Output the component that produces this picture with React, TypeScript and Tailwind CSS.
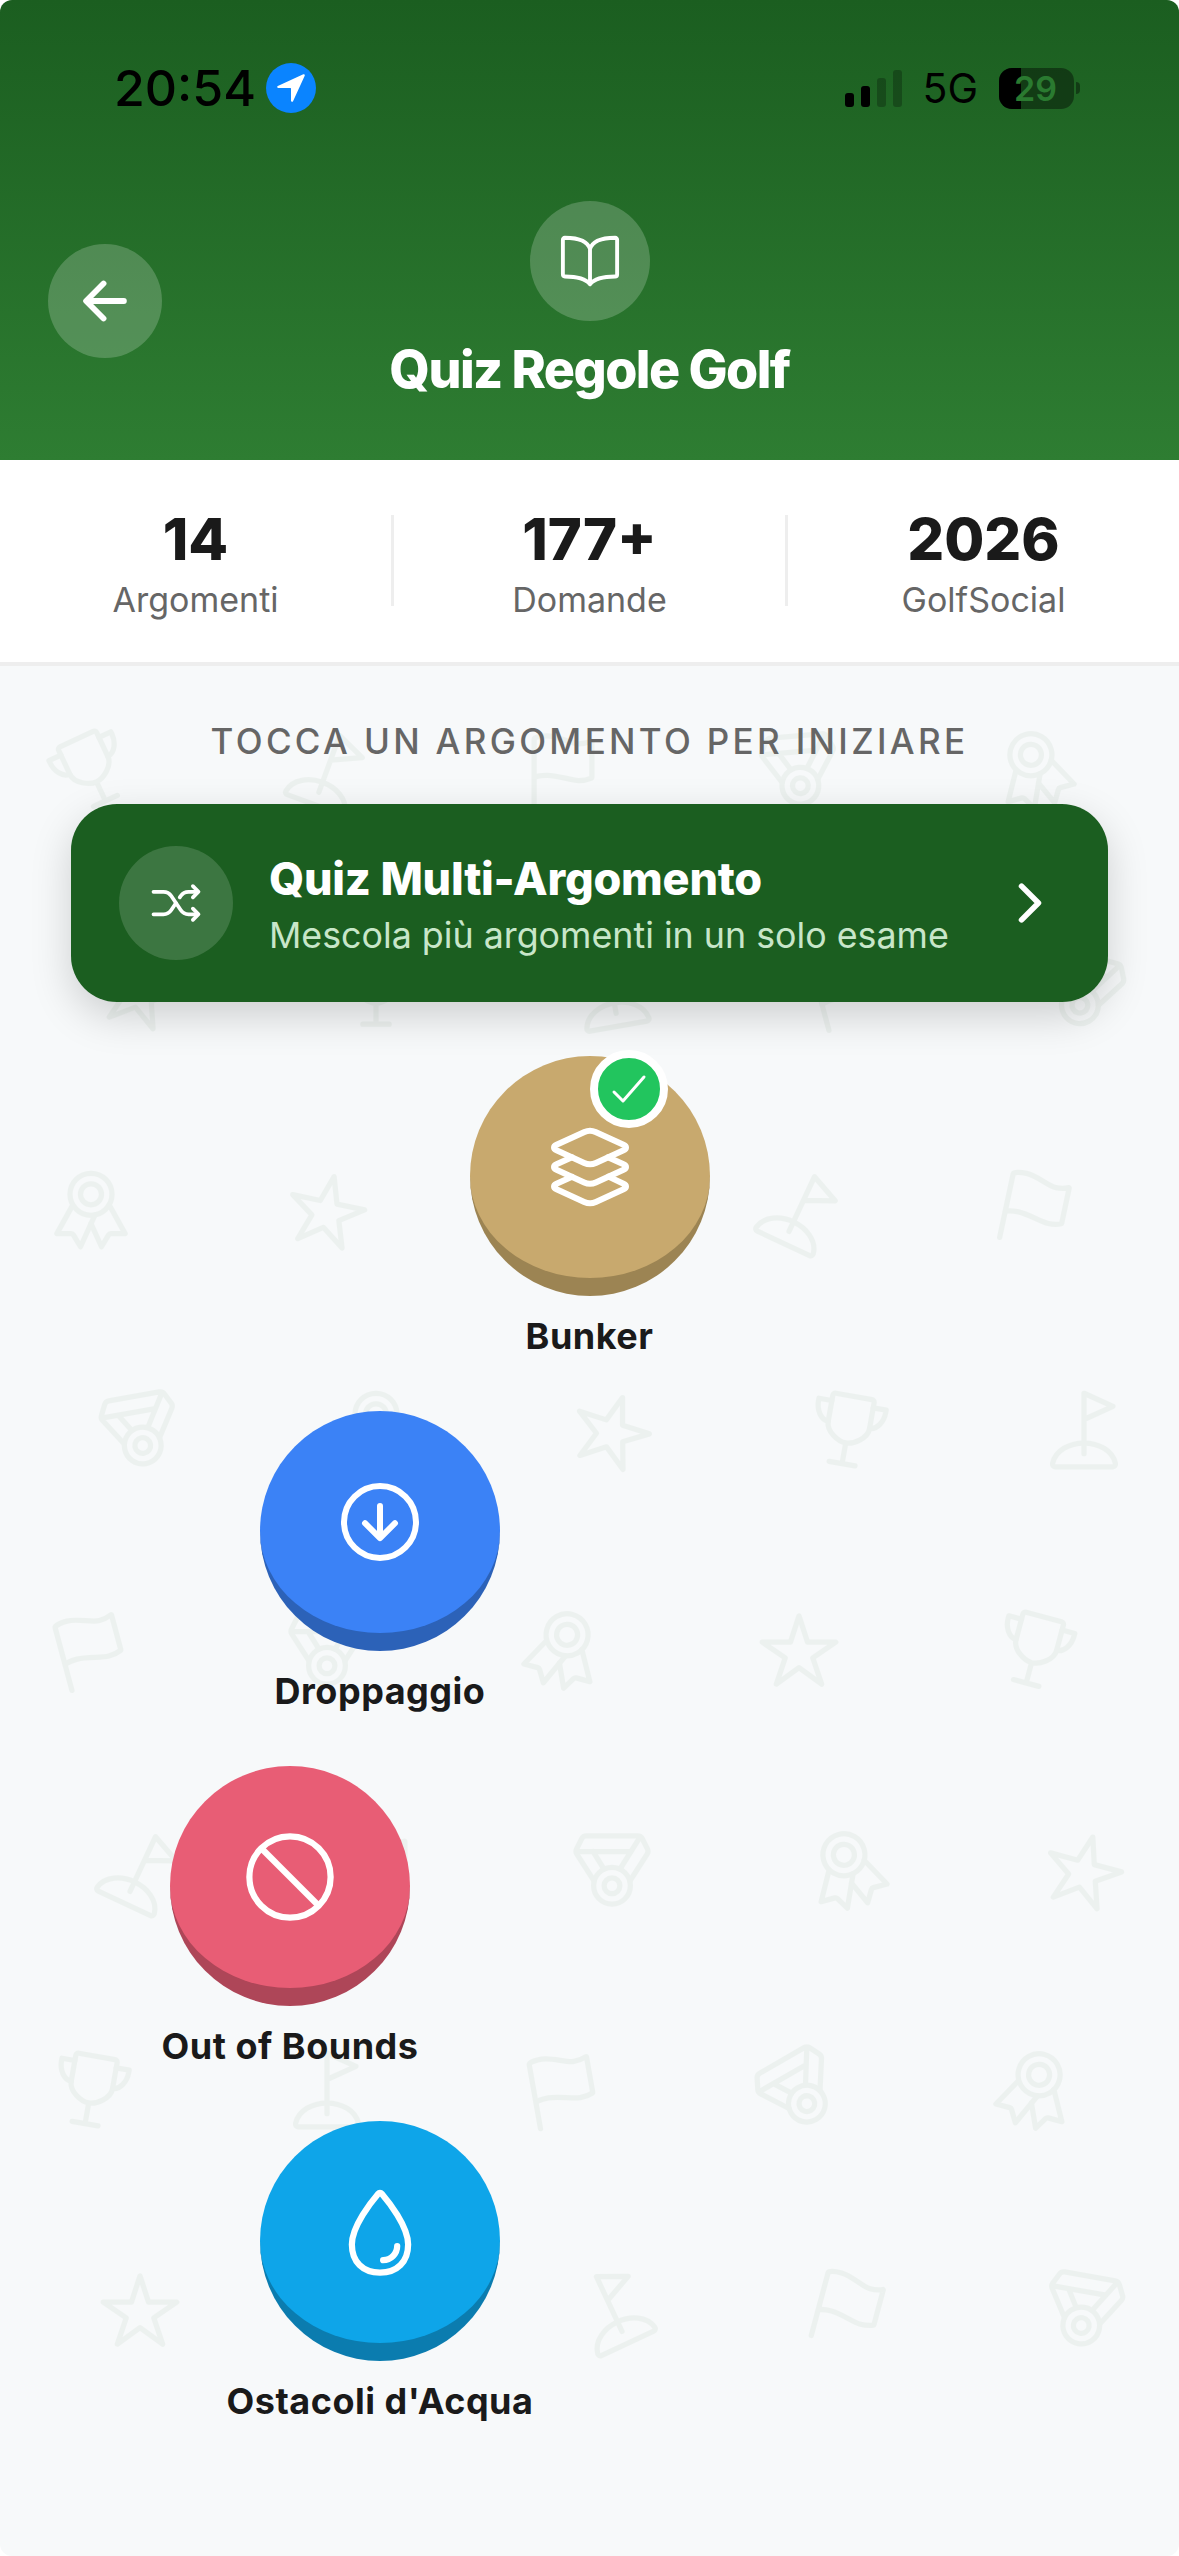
import type { ReactNode } from "react";
import {
  IoArrowBack,
  IoArrowDownCircleOutline,
  IoBanOutline,
  IoBookOutline,
  IoCheckmark,
  IoChevronForward,
  IoFlagOutline,
  IoGolfOutline,
  IoLayersOutline,
  IoMedalOutline,
  IoNavigate,
  IoRibbonOutline,
  IoShuffle,
  IoStarOutline,
  IoTrophyOutline,
  IoWaterOutline,
} from "react-icons/io5";

const patternIcons = [IoTrophyOutline, IoGolfOutline, IoFlagOutline, IoMedalOutline, IoRibbonOutline, IoStarOutline];

// rotation of every background icon, row by row
const patternRows = [
  [-25, 20, 0, -5, -15],
  [15, 0, -10, -15, 15],
  [0, 12, 0, 25, 12],
  [-10, 0, 18, 10, 0],
  [-15, 0, 15, 0, 15],
  [25, 0, 0, -15, 15],
  [10, 0, -10, -30, 15],
  [0, 0, -25, 15, 10],
];

const stats = [
  { value: "14", label: "Argomenti" },
  { value: "177+", label: "Domande" },
  { value: "2026", label: "GolfSocial" },
];

function StatusBar() {
  return (
    <div className="flex h-[52px] items-center justify-between pl-[114px] pr-[99px]">
      <div className="flex items-center gap-[10px]">
        <span className="text-[50px] font-medium leading-none text-black">20:54</span>
        <div className="flex h-[50px] w-[50px] items-center justify-center rounded-full bg-[#0a84ff]">
          <IoNavigate size={34} className="text-white" />
        </div>
      </div>
      <div className="flex items-center">
        <div className="flex items-end gap-[7px]">
          <div className="h-[14px] w-[9px] rounded-[3px] bg-black" />
          <div className="h-[21px] w-[9px] rounded-[3px] bg-black" />
          <div className="h-[29px] w-[9px] rounded-[3px] bg-black/25" />
          <div className="h-[37px] w-[9px] rounded-[3px] bg-black/25" />
        </div>
        <span className="ml-[20px] text-[41px] font-normal leading-none text-black">5G</span>
        <div className="relative ml-[21px] h-[41px] w-[75px] overflow-hidden rounded-[13px] bg-black/40">
          <div className="h-full w-[22px] bg-black" />
          <span className="absolute left-[15px] top-0 text-[34px] font-semibold leading-[41px] text-[#2a7a30]">29</span>
        </div>
        <div className="ml-[2px] h-[12px] w-[4px] rounded-r-full bg-black/40" />
      </div>
    </div>
  );
}

function Header() {
  return (
    <header className="relative flex h-[460px] flex-col bg-linear-to-b from-[#1b5e20] to-[#2e7d32] pt-[62px]">
      <StatusBar />
      <div className="mt-[87px] flex h-[120px] w-[120px] items-center justify-center self-center rounded-full bg-white/20">
        <IoBookOutline size={62} className="text-white" />
      </div>
      <h1 className="mt-[19px] text-center text-[52px] font-extrabold leading-[60px] tracking-[-0.03em] text-white">Quiz Regole Golf</h1>
      <button className="absolute left-[48px] top-[244px] flex h-[114px] w-[114px] items-center justify-center rounded-full bg-white/20">
        <IoArrowBack size={62} className="text-white" />
      </button>
    </header>
  );
}

function Stats() {
  return (
    <section className="flex h-[206px] border-b-4 border-[#eeeeee] bg-white">
      {stats.map((s) => (
        <div key={s.label} className="flex flex-1 flex-col items-center pt-[44px]">
          <span className="text-[58px] font-extrabold leading-[70px] text-[#1a1a1a]">{s.value}</span>
          <span className="mt-[6px] text-[34px] leading-[40px] text-[#666666]">{s.label}</span>
        </div>
      )).flatMap((el, i) =>
        i === 0 ? [el] : [<div key={i} className="mt-[55px] h-[91px] w-[3px] bg-[#eeeeee]" />, el],
      )}
    </section>
  );
}

function Pattern() {
  return (
    <div className="absolute inset-0 flex flex-col gap-[136px] overflow-hidden pt-[62px] text-[#1b5e20] opacity-[0.045]">
      {patternRows.map((row, r) => (
        <div key={r} className={r % 2 === 0 ? "flex gap-[152px] pl-[49px]" : "flex gap-[152px] pl-[98px]"}>
          {row.map((deg, c) => {
            const Icon = patternIcons[(c - r + 48) % 6];
            return <Icon key={c} size={84} className="shrink-0" style={{ transform: `rotate(${deg}deg)` }} />;
          })}
        </div>
      ))}
    </div>
  );
}

function Node({ label, face, children, done, rowClass }: { label: string; face: string; children: ReactNode; done?: boolean; rowClass?: string }) {
  return (
    <div className={`flex justify-center ${rowClass ?? ""}`}>
      <div className="flex w-[240px] flex-col items-center">
        <div className={`relative flex h-[240px] w-[240px] items-center justify-center rounded-full border-b-[18px] text-white ${face}`}>
          {children}
          {done && (
            <div className="absolute left-[120px] top-[-6px] flex h-[78px] w-[78px] items-center justify-center rounded-full border-[8px] border-white bg-[#22c55e]">
              <IoCheckmark size={48} />
            </div>
          )}
        </div>
        <span className="mt-[18px] whitespace-nowrap text-[36px] font-bold leading-[44px] tracking-[0.014em] text-[#1a1a1a]">{label}</span>
      </div>
    </div>
  );
}

export default function App() {
  return (
    <div className="flex h-[2556px] w-[1179px] flex-col overflow-hidden rounded-[12px] bg-white font-['Inter',sans-serif]">
      <Header />
      <Stats />
      <main className="relative flex-1 bg-[#f7f9fa]">
        <Pattern />
        <div className="relative flex flex-col pt-[53px]">
          <p className="text-center text-[35px] font-medium leading-[44px] tracking-[0.095em] text-[#666666]">TOCCA UN ARGOMENTO PER INIZIARE</p>

          <div className="mx-[71px] mt-[41px] flex h-[198px] items-center rounded-[46px] bg-[#1b5e20] px-[48px] shadow-[0_14px_40px_rgba(0,0,0,0.17)]">
            <div className="flex h-[114px] w-[114px] items-center justify-center rounded-full bg-white/15">
              <IoShuffle size={60} className="text-white" />
            </div>
            <div className="ml-[36px] flex flex-1 flex-col pt-[4px]">
              <span className="text-[45px] font-extrabold leading-[56px] tracking-[-0.005em] text-white">Quiz Multi-Argomento</span>
              <span className="mt-[4px] text-[35.8px] leading-[48px] text-[#c8e6c9]">Mescola più argomenti in un solo esame</span>
            </div>
            <IoChevronForward size={60} className="text-white" />
          </div>

          <div className="mt-[54px] flex flex-col gap-[53px]">
            <Node label="Bunker" face="border-[#9c8453] bg-[#c8a96e]" done>
              <IoLayersOutline size={96} />
            </Node>
            <Node label="Droppaggio" face="border-[#2c62b8] bg-[#3b82f6]" rowClass="pr-[419px]">
              <IoArrowDownCircleOutline size={96} />
            </Node>
            <Node label="Out of Bounds" face="border-[#ae4658] bg-[#e85d75]" rowClass="pr-[599px]">
              <IoBanOutline size={100} />
            </Node>
            <Node label="Ostacoli d'Acqua" face="border-[#0b7caf] bg-[#0ea5e9]" rowClass="pr-[419px]">
              <IoWaterOutline size={100} />
            </Node>
          </div>
        </div>
      </main>
    </div>
  );
}
